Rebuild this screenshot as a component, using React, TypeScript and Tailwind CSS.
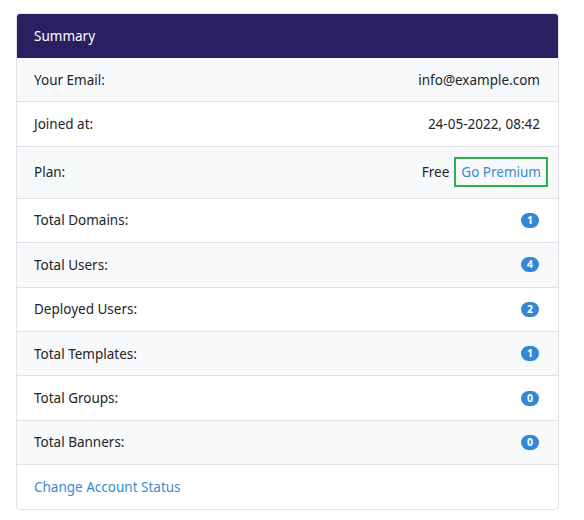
const ROWS: Array<{ label: string; value?: string; badge?: number; plan?: boolean }> = [
  { label: 'Your Email:', value: 'info@example.com' },
  { label: 'Joined at:', value: '24-05-2022, 08:42' },
  { label: 'Plan:', plan: true },
  { label: 'Total Domains:', badge: 1 },
  { label: 'Total Users:', badge: 4 },
  { label: 'Deployed Users:', badge: 2 },
  { label: 'Total Templates:', badge: 1 },
  { label: 'Total Groups:', badge: 0 },
  { label: 'Total Banners:', badge: 0 },
];

export default function App() {
  return (
    <div className="min-h-[520px] bg-white pt-[13px] px-[16px] font-['Noto_Sans',sans-serif] text-[13.5px] text-[#212529]">
      <div className="w-[543px] rounded-[4px] border border-[#dfe2e6] overflow-hidden">
        <div className="bg-[#2a1f61] text-white px-[17px] py-[12px] leading-[20px]">Summary</div>

        {ROWS.map((row, i) => (
          <div
            key={row.label}
            className={`flex items-center justify-between border-b border-[#dee2e6] pl-[17px] ${
              row.plan ? 'pr-[10px] h-[52px]' : 'pr-[18px] h-[44.4px]'
            } ${i % 2 === 0 ? 'bg-[#f8f9fb]' : 'bg-white'}`}
          >
            <span>{row.label}</span>
            {row.value && <span>{row.value}</span>}
            {row.plan && (
              <div className="flex items-center gap-[5px]">
                <span>Free</span>
                <button className="h-[30px] px-[5px] border-2 border-[#2eb14a] text-[#3a8ad4] leading-[20px]">
                  Go Premium
                </button>
              </div>
            )}
            {row.badge !== undefined && (
              <span className="mr-[1px] min-w-[18px] h-[15px] px-[5px] rounded-full bg-[#3288d6] text-white text-[10.5px] font-bold leading-[15px] text-center">
                {row.badge}
              </span>
            )}
          </div>
        ))}

        <div className="h-[44px] flex items-center pl-[17px] text-[#3a8ad4]">Change Account Status</div>
      </div>
    </div>
  );
}
